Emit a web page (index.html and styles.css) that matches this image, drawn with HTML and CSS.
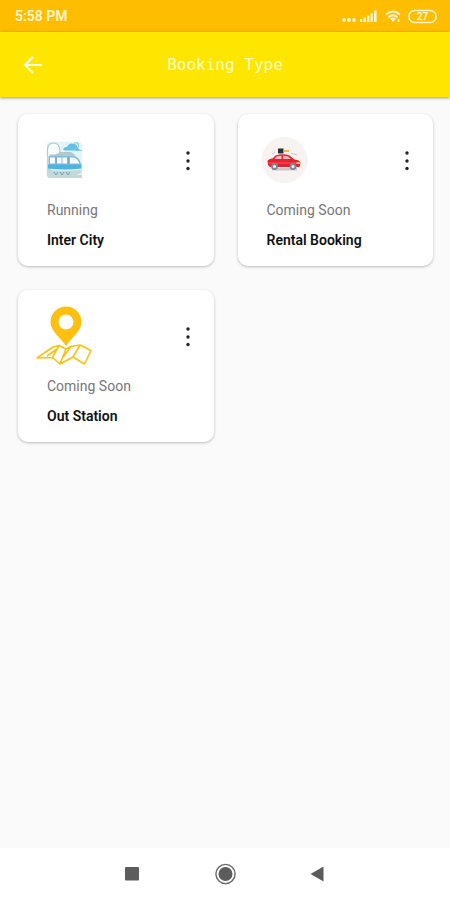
FILE: index.html
```html
<!DOCTYPE html>
<html lang="en">
<head>
<meta charset="utf-8">
<meta name="viewport" content="width=device-width, initial-scale=1">
<title>Booking Type</title>
<link rel="stylesheet" href="styles.css">
</head>
<body>
<div class="status">
  <span class="clock">5:58 PM</span>
  <svg class="status-icons" width="96" height="16" viewBox="0 0 96 16" fill="#fff6d0" aria-hidden="true">
    <circle cx="3" cy="12" r="1.900"/><circle cx="8" cy="12" r="1.900"/><circle cx="13" cy="12" r="1.900"/>
    <path d="M19 11h2.400v3H19zM22.500 9.500h2.400V14h-2.400zM26 7.500h2.400V14H26zM29.500 5.500h2.400V14h-2.400zM33 2.500h2.600V14H33z"/>
    <g fill="none" stroke="#fff6d0" stroke-width="2"><path d="M45 6.500q7-6 14 0M47.500 9.300q4.500-4 9 0"/></g>
    <path d="M49 10.500q3-2 6 0L52 14zM56.500 11.500h2V14h-2z"/>
    <rect x="67.800" y="2.500" width="27.400" height="12" rx="6" fill="none" stroke="#fff6d0" stroke-width="1.600"/>
    <text class="battery" x="81.500" y="12" text-anchor="middle">27</text>
  </svg>
</div>
<header class="bar">
  <button class="back" aria-label="Back">
    <svg width="24" height="24" viewBox="0 0 24 24" fill="none" stroke="#fffce0" stroke-width="2.200"><path d="M21 12H4M12 4l-8 8 8 8"/></svg>
  </button>
  <h1 class="title">Booking Type</h1>
</header>
<main class="cards">
  <article class="card">
    <div class="card-top">
      <div class="art">
        <svg width="38" height="38" viewBox="0 0 38 38" aria-hidden="true">
          <rect x="1" y="1" width="35" height="36" rx="3" fill="#e1f5f7"/>
          <path d="M1.500 34V9q0-7 6-7t6.500 8v4H4v20z" fill="#f8fdfd" stroke="#b5c9cb" stroke-width="1.200"/>
          <path d="M1 15h3v18H1z" fill="#c3d7d9"/>
          <path d="M17 8.500q1-3 4-2.500 2-5 7-3 3 0 3 3l3 3q-2 1-5 .5H19z" fill="#62c0e6"/>
          <path d="M28 2.500q4-2 4.500 1.500T29 7M30 9.500h6" fill="none" stroke="#8bcbd6" stroke-width="1.200"/>
          <path d="M8 14.500l6-3.500h11l5 3.500z" fill="#b1c9cd"/>
          <path d="M3 16q0-1.500 2-1.500h22q6 1 8 8V27H3z" fill="#82bedb"/>
          <path d="M4 16.500h5v6H4zM11 16.500h4.500v6H11zM16.500 16.500H21v6h-4.500zM24 16.500h4q4 1.500 5.500 6H24z" fill="#f7fcff"/>
          <path d="M10 16v7M22.500 16v7" stroke="#8995b4" stroke-width=".8"/>
          <path d="M2 23.500h33.500v4q-15 2-33.500 0z" fill="#4db3e0"/>
          <path d="M2 28.800q16 1.800 33.500 0v3L30 34h6v3H4q-3 0-3-3v-4z" fill="#c2d8da"/>
          <path d="M8 31l2 3 2-3m2 0l2 3 2-3m2 0l2 3 2-3" fill="none" stroke="#799ead"/>
        </svg>
      </div>
      <button class="more" aria-label="More options for Inter City"><svg width="24" height="24" viewBox="0 0 24 24" fill="#222"><circle cx="12" cy="5" r="1.700"/><circle cx="12" cy="13" r="1.700"/><circle cx="12" cy="20.500" r="1.700"/></svg></button>
    </div>
    <p class="state">Running</p>
    <h2 class="name">Inter City</h2>
  </article>
  <article class="card">
    <div class="card-top">
      <div class="art">
        <svg width="48" height="48" viewBox="0 0 48 48" aria-hidden="true">
          <circle cx="23.500" cy="24" r="23" fill="#f7f3f1"/>
          <path d="M17 12.500h5.500v5H17z" fill="#26323a"/><path d="M22.500 14h5.500v2h-5.500z" fill="#f6b64c"/>
          <path d="M11 18l3-2M30 17l6 2" stroke="#c9c9c9"/>
          <path d="M11 32h25v2.500H11z" fill="#c9c9cc"/>
          <path d="M6.500 25q1-2 5-2.500l3-3q8-2.500 14 0l5 4q5 .5 6 3l-1 4.500H9l-2-2z" fill="#e9202e"/>
          <path d="M13.500 23l2-2.500q2-.8 5-.8V23zM22 19.800q4 0 5.500 1L30 23h-8z" fill="#f6bcc0"/>
          <path d="M8 27h28" stroke="#ff5964"/><path d="M35.500 26h3l.5 2h-3.500z" fill="#ffc16b"/>
          <g fill="#e9eef0" stroke="#7b8891" stroke-width="1.800"><circle cx="13.500" cy="30.500" r="2.500"/><circle cx="32" cy="30.500" r="2.500"/></g>
        </svg>
      </div>
      <button class="more" aria-label="More options for Rental Booking"><svg width="24" height="24" viewBox="0 0 24 24" fill="#222"><circle cx="12" cy="5" r="1.700"/><circle cx="12" cy="13" r="1.700"/><circle cx="12" cy="20.500" r="1.700"/></svg></button>
    </div>
    <p class="state">Coming Soon</p>
    <h2 class="name">Rental Booking</h2>
  </article>
  <article class="card">
    <div class="card-top">
      <div class="art">
        <svg width="60" height="60" viewBox="0 0 60 60" aria-hidden="true">
          <path fill="#fdc010" fill-rule="evenodd" d="M31 .5A15.500 15.500 0 0 0 15.500 16C15.500 25 26 32 31 40 36 32 46.500 25 46.500 16A15.500 15.500 0 0 0 31 .5zM31 8.500a7.500 7.500 0 1 1 0 15 7.500 7.500 0 0 1 0-15z"/>
          <path fill="none" stroke="#fdc010" stroke-width="1.600" stroke-linejoin="round" d="M2 52L18 41l6-1.500L31 43l5-2.500 9-1.500 11 5.500-6.500 13.500L38 51l-13 7-7.500-6.500zM24 39.500l-6.500 12M31 43l-6 15M45 39l-7 12M36 40.500L27.500 52M12 50l10-7"/>
        </svg>
      </div>
      <button class="more" aria-label="More options for Out Station"><svg width="24" height="24" viewBox="0 0 24 24" fill="#222"><circle cx="12" cy="5" r="1.700"/><circle cx="12" cy="13" r="1.700"/><circle cx="12" cy="20.500" r="1.700"/></svg></button>
    </div>
    <p class="state">Coming Soon</p>
    <h2 class="name">Out Station</h2>
  </article>
</main>
<nav class="nav" aria-label="System">
  <button aria-label="Recent apps"><svg width="24" height="24" viewBox="0 0 24 24"><rect x="5" y="5" width="14" height="13.500" rx="1" fill="#5c5c5c"/></svg></button>
  <button aria-label="Home"><svg width="24" height="24" viewBox="0 0 24 24"><circle cx="12.500" cy="12" r="9.600" fill="none" stroke="#686868" stroke-width="1.400"/><circle cx="12.500" cy="12" r="7" fill="#5c5c5c"/></svg></button>
  <button aria-label="Back"><svg width="24" height="24" viewBox="0 0 24 24"><path d="M4.500 12L17.500 4.500v15z" fill="#5c5c5c"/></svg></button>
</nav>
</body>
</html>
```
FILE: styles.css
```css
* { box-sizing: border-box; }
body {
  margin: 0;
  min-height: 100vh;
  display: flex;
  flex-direction: column;
  background: #fafafa;
  font-family: Roboto, "Liberation Sans", sans-serif;
}
h1, h2, p { margin: 0; }
button {
  display: flex;
  align-items: center;
  justify-content: center;
  padding: 0;
  border: 0;
  background: none;
}
.status {
  display: flex;
  align-items: center;
  justify-content: space-between;
  height: 32px;
  padding: 0 13px 0 15px;
  background: #ffbd00;
}
.clock {
  color: #fff6d0;
  font-size: 14px;
  font-weight: 600;
}
.battery { font-size: 10px; font-weight: 600; }
.bar {
  display: grid;
  grid-template-columns: 24px 1fr 24px;
  align-items: center;
  height: 65px;
  padding: 0 21px;
  background: #ffe600;
  box-shadow: 0 1px 3px rgba(0, 0, 0, 0.4);
}
.back { width: 24px; height: 24px; }
.title {
  color: #fffcc8;
  font-family: "DejaVu Sans Mono", monospace;
  font-size: 16px;
  font-weight: 400;
  text-align: center;
}
.cards {
  flex: 1;
  display: grid;
  grid-template-columns: 1fr 1fr;
  align-content: start;
  gap: 24px;
  padding: 17px 17px 24px 18px;
}
.card {
  padding: 16px 14px 16px 17px;
  border-radius: 10px;
  background: #fff;
  box-shadow: 0 1px 3px rgba(0, 0, 0, 0.25);
}
.card-top {
  display: flex;
  align-items: center;
  justify-content: space-between;
}
.art {
  display: flex;
  align-items: center;
  justify-content: center;
  width: 60px;
  height: 60px;
}
.more { width: 24px; height: 32px; }
.state, .name {
  margin-top: 10px;
  padding-left: 12px;
  line-height: 20px;
}
.state { color: #777; font-size: 14px; }
.name { color: #111; font-size: 14px; font-weight: 600; }
.nav {
  display: flex;
  align-items: center;
  justify-content: center;
  gap: 69px;
  height: 52px;
  background: #fff;
}
```
